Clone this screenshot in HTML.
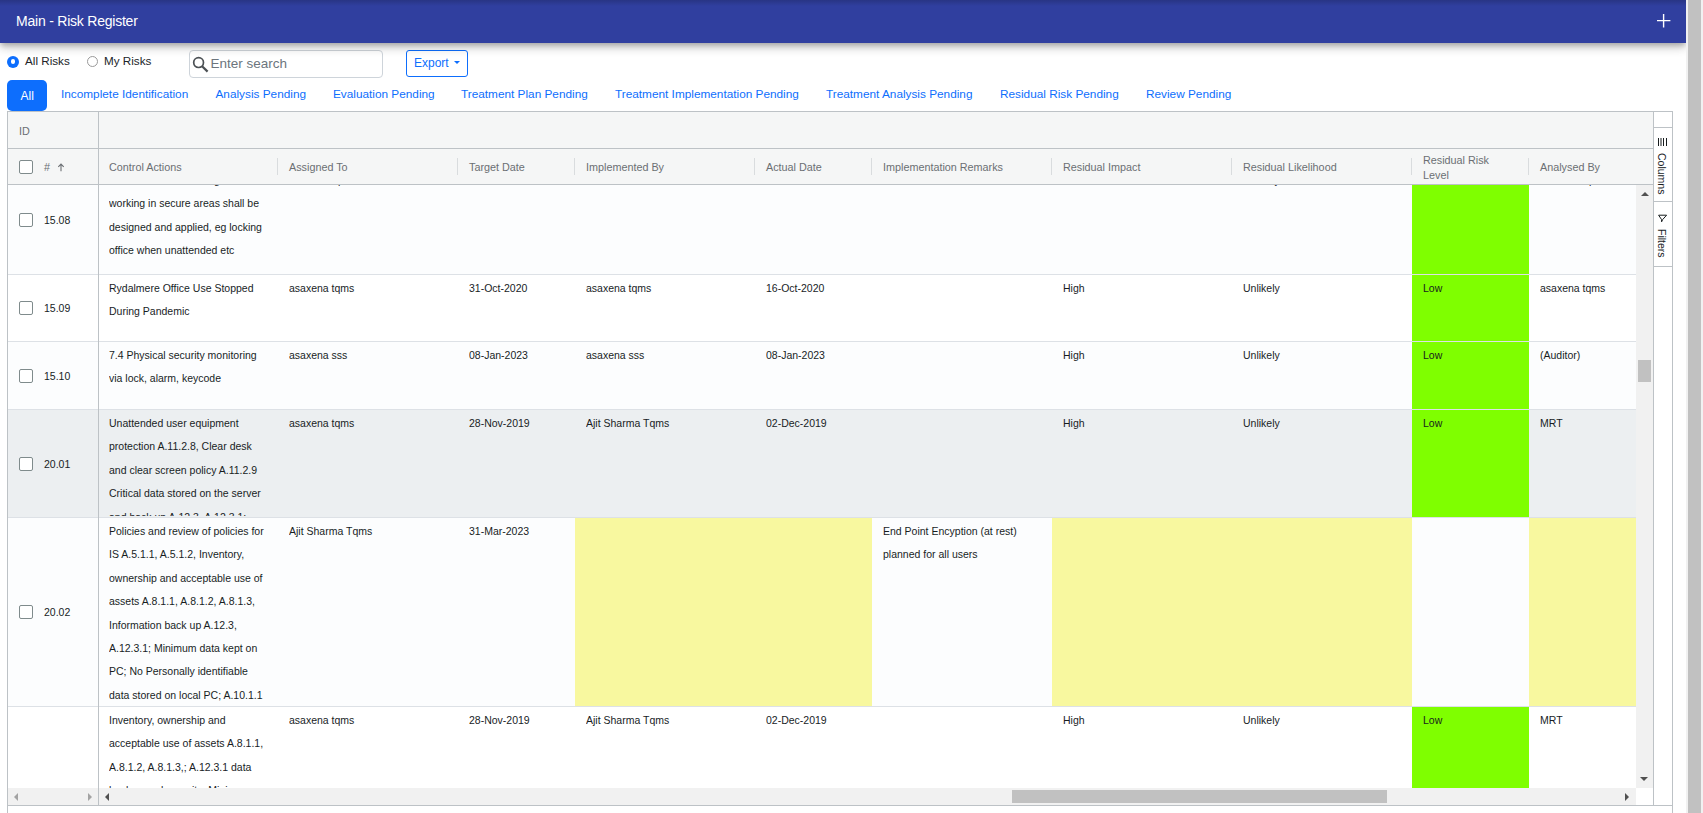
<!DOCTYPE html><html><head><meta charset="utf-8"><style>
*{box-sizing:border-box;margin:0;padding:0}
html,body{width:1703px;height:813px;overflow:hidden;background:#fff;font-family:"Liberation Sans", sans-serif;}
.a{position:absolute}
.t{position:absolute;white-space:pre;}
.cell{position:absolute;font-size:10.5px;line-height:23.4px;color:#181d1f;white-space:pre;}
.cb{position:absolute;width:14px;height:14px;border:1px solid #7f8b8c;border-radius:2px;background:#fff}
.sep{position:absolute;width:1px;height:17px;top:158px;background:#d9dcde}
.hdr{position:absolute;font-size:10.8px;color:#6b6f73;white-space:pre;}
</style></head><body>
<div class="a" style="left:7px;top:55.5px;width:12px;height:12px;border-radius:50%;background:#0d6efd"></div>
<div class="a" style="left:10.7px;top:59.2px;width:4.6px;height:4.6px;border-radius:50%;background:#fff"></div>
<div class="t" style="left:25px;top:54.2px;font-size:11.7px;line-height:14px;color:#212529">All Risks</div>
<div class="a" style="left:87px;top:56px;width:11px;height:11px;border-radius:50%;border:1px solid #9a9a9a;background:#fff"></div>
<div class="t" style="left:104px;top:54.2px;font-size:11.7px;line-height:14px;color:#212529">My Risks</div>
<div class="a" style="left:189px;top:50px;width:194px;height:28px;border:1px solid #ced4da;border-radius:4px;background:#fff"></div>
<svg class="a" style="left:190px;top:55px" width="20" height="20" viewBox="0 0 20 20"><circle cx="8.6" cy="7.6" r="4.9" fill="none" stroke="#4b5054" stroke-width="1.7"/><line x1="12.1" y1="11.2" x2="17.6" y2="16.6" stroke="#4b5054" stroke-width="2.2"/></svg>
<div class="t" style="left:210.5px;top:55.5px;font-size:13.5px;line-height:16px;color:#6c757d">Enter search</div>
<div class="a" style="left:406px;top:50px;width:62px;height:27px;border:1px solid #0d6efd;border-radius:3px;background:#fff"></div>
<div class="t" style="left:414px;top:55.7px;font-size:12px;line-height:14px;color:#0d6efd">Export</div>
<div class="a" style="left:454px;top:61px;width:0;height:0;border-left:3px solid transparent;border-right:3px solid transparent;border-top:3px solid #0d6efd"></div>
<div class="a" style="left:0;top:0;width:1686px;height:43px;background:#303f9f;box-shadow:0 3px 5px -1px rgba(0,0,0,.2), 0 5px 8px 0 rgba(0,0,0,.14), 0 1px 15px 0 rgba(0,0,0,.12);background-image:linear-gradient(rgba(0,0,0,.17),rgba(0,0,0,0) 6px)"></div>
<div class="t" style="left:16px;top:13px;font-size:14px;letter-spacing:-0.22px;line-height:16px;color:#fff">Main - Risk Register</div>
<svg class="a" style="left:1650px;top:7px" width="27" height="27" viewBox="0 0 27 27"><path d="M7 13.6 H20.4 M13.6 7 V20.4" stroke="#fff" stroke-width="1.4"/></svg>
<div class="a" style="left:7px;top:80px;width:40px;height:31px;border-radius:5px;background:#0d6efd"></div>
<div class="t" style="left:20.5px;top:88.5px;font-size:12px;line-height:14px;color:#fff">All</div>
<div class="t" style="left:61px;top:87px;font-size:11.8px;line-height:14px;color:#0d6efd">Incomplete Identification</div>
<div class="t" style="left:215.5px;top:87px;font-size:11.8px;line-height:14px;color:#0d6efd">Analysis Pending</div>
<div class="t" style="left:333px;top:87px;font-size:11.8px;line-height:14px;color:#0d6efd">Evaluation Pending</div>
<div class="t" style="left:461px;top:87px;font-size:11.8px;line-height:14px;color:#0d6efd">Treatment Plan Pending</div>
<div class="t" style="left:615px;top:87px;font-size:11.8px;line-height:14px;color:#0d6efd">Treatment Implementation Pending</div>
<div class="t" style="left:826px;top:87px;font-size:11.8px;line-height:14px;color:#0d6efd">Treatment Analysis Pending</div>
<div class="t" style="left:1000px;top:87px;font-size:11.8px;line-height:14px;color:#0d6efd">Residual Risk Pending</div>
<div class="t" style="left:1146px;top:87px;font-size:11.8px;line-height:14px;color:#0d6efd">Review Pending</div>
<div class="a" style="left:7px;top:111px;width:1666px;height:702px;border:1px solid #bdc2c6;border-bottom:none"></div>
<div class="a" style="left:8px;top:112px;width:1645px;height:72px;background:#f5f6f6"></div>
<div class="a" style="left:8px;top:148px;width:1645px;height:1px;background:#bdc2c6"></div>
<div class="a" style="left:8px;top:184px;width:1645px;height:1px;background:#bdc2c6"></div>
<div class="a" style="left:98px;top:112px;width:1px;height:693px;background:#bdc2c6"></div>
<div class="a" style="left:1653px;top:112px;width:1px;height:693px;background:#bdc2c6"></div>
<div class="a" style="left:8px;top:805px;width:1665px;height:1px;background:#bdc2c6"></div>
<div class="hdr" style="left:19px;top:124px;line-height:14px">ID</div>
<div class="cb" style="left:19px;top:160px"></div>
<div class="hdr" style="left:44px;top:160px;line-height:14px">#</div>
<svg class="a" style="left:56px;top:162px" width="10" height="12" viewBox="0 0 10 12"><path d="M5 2.2 L5 9.2 M2.3 4.8 L5 2.1 L7.7 4.8" fill="none" stroke="#6b6f73" stroke-width="1.1"/></svg>
<div class="hdr" style="left:109px;top:160px;line-height:14px">Control Actions</div>
<div class="hdr" style="left:289px;top:160px;line-height:14px">Assigned To</div>
<div class="sep" style="left:277px"></div>
<div class="hdr" style="left:469px;top:160px;line-height:14px">Target Date</div>
<div class="sep" style="left:457px"></div>
<div class="hdr" style="left:586px;top:160px;line-height:14px">Implemented By</div>
<div class="sep" style="left:574px"></div>
<div class="hdr" style="left:766px;top:160px;line-height:14px">Actual Date</div>
<div class="sep" style="left:754px"></div>
<div class="hdr" style="left:883px;top:160px;line-height:14px">Implementation Remarks</div>
<div class="sep" style="left:871px"></div>
<div class="hdr" style="left:1063px;top:160px;line-height:14px">Residual Impact</div>
<div class="sep" style="left:1051px"></div>
<div class="hdr" style="left:1243px;top:160px;line-height:14px">Residual Likelihood</div>
<div class="sep" style="left:1231px"></div>
<div class="hdr" style="left:1423px;top:152.5px;line-height:15px">Residual Risk
Level</div>
<div class="sep" style="left:1411px"></div>
<div class="hdr" style="left:1540px;top:160px;line-height:14px">Analysed By</div>
<div class="sep" style="left:1528px"></div>
<div class="a" style="left:99px;top:185px;width:1537px;height:603px;overflow:hidden">
<div class="a" style="left:0;top:-19px;width:1600px;height:109px;background:#fcfdfe;border-bottom:1px solid #dde1e6;overflow:hidden">
<div class="cell" style="left:10px;top:2.9px;height:104px;overflow:hidden;width:169px">Controls for the building and
working in secure areas shall be
designed and applied, eg locking
office when unattended etc</div>
<div class="cell" style="left:190px;top:2.9px;height:104px;overflow:hidden;width:169px">asaxena tqms</div>
<div class="cell" style="left:370px;top:2.9px;height:104px;overflow:hidden;width:106px">31-Oct-2020</div>
<div class="cell" style="left:487px;top:2.9px;height:104px;overflow:hidden;width:169px">asaxena sss</div>
<div class="cell" style="left:667px;top:2.9px;height:104px;overflow:hidden;width:106px">16-Oct-2020</div>
<div class="cell" style="left:964px;top:2.9px;height:104px;overflow:hidden;width:169px">Medium</div>
<div class="cell" style="left:1144px;top:2.9px;height:104px;overflow:hidden;width:169px">Unlikely</div>
<div class="a" style="left:1313px;top:0;width:117px;height:108px;background:#7fff00"></div>
<div class="cell" style="left:1324px;top:2.9px;height:104px;overflow:hidden;width:106px">Low</div>
<div class="cell" style="left:1441px;top:2.9px;height:104px;overflow:hidden;width:169px">asaxena tqms</div>
</div>
<div class="a" style="left:0;top:90px;width:1600px;height:67px;background:#ffffff;border-bottom:1px solid #dde1e6;overflow:hidden">
<div class="cell" style="left:10px;top:1.9px;height:63px;overflow:hidden;width:169px">Rydalmere Office Use Stopped
During Pandemic</div>
<div class="cell" style="left:190px;top:1.9px;height:63px;overflow:hidden;width:169px">asaxena tqms</div>
<div class="cell" style="left:370px;top:1.9px;height:63px;overflow:hidden;width:106px">31-Oct-2020</div>
<div class="cell" style="left:487px;top:1.9px;height:63px;overflow:hidden;width:169px">asaxena tqms</div>
<div class="cell" style="left:667px;top:1.9px;height:63px;overflow:hidden;width:106px">16-Oct-2020</div>
<div class="cell" style="left:964px;top:1.9px;height:63px;overflow:hidden;width:169px">High</div>
<div class="cell" style="left:1144px;top:1.9px;height:63px;overflow:hidden;width:169px">Unlikely</div>
<div class="a" style="left:1313px;top:0;width:117px;height:66px;background:#7fff00"></div>
<div class="cell" style="left:1324px;top:1.9px;height:63px;overflow:hidden;width:106px">Low</div>
<div class="cell" style="left:1441px;top:1.9px;height:63px;overflow:hidden;width:169px">asaxena tqms</div>
</div>
<div class="a" style="left:0;top:157px;width:1600px;height:68px;background:#fcfdfe;border-bottom:1px solid #dde1e6;overflow:hidden">
<div class="cell" style="left:10px;top:1.9px;height:64px;overflow:hidden;width:169px">7.4 Physical security monitoring
via lock, alarm, keycode</div>
<div class="cell" style="left:190px;top:1.9px;height:64px;overflow:hidden;width:169px">asaxena sss</div>
<div class="cell" style="left:370px;top:1.9px;height:64px;overflow:hidden;width:106px">08-Jan-2023</div>
<div class="cell" style="left:487px;top:1.9px;height:64px;overflow:hidden;width:169px">asaxena sss</div>
<div class="cell" style="left:667px;top:1.9px;height:64px;overflow:hidden;width:106px">08-Jan-2023</div>
<div class="cell" style="left:964px;top:1.9px;height:64px;overflow:hidden;width:169px">High</div>
<div class="cell" style="left:1144px;top:1.9px;height:64px;overflow:hidden;width:169px">Unlikely</div>
<div class="a" style="left:1313px;top:0;width:117px;height:67px;background:#7fff00"></div>
<div class="cell" style="left:1324px;top:1.9px;height:64px;overflow:hidden;width:106px">Low</div>
<div class="cell" style="left:1441px;top:1.9px;height:64px;overflow:hidden;width:169px">(Auditor)</div>
</div>
<div class="a" style="left:0;top:225px;width:1600px;height:108px;background:#eceff1;border-bottom:1px solid #dde1e6;overflow:hidden">
<div class="cell" style="left:10px;top:1.9px;height:104px;overflow:hidden;width:169px">Unattended user equipment
protection A.11.2.8, Clear desk
and clear screen policy A.11.2.9
Critical data stored on the server
and back up A.12.3, A.12.3.1;</div>
<div class="cell" style="left:190px;top:1.9px;height:104px;overflow:hidden;width:169px">asaxena tqms</div>
<div class="cell" style="left:370px;top:1.9px;height:104px;overflow:hidden;width:106px">28-Nov-2019</div>
<div class="cell" style="left:487px;top:1.9px;height:104px;overflow:hidden;width:169px">Ajit Sharma Tqms</div>
<div class="cell" style="left:667px;top:1.9px;height:104px;overflow:hidden;width:106px">02-Dec-2019</div>
<div class="cell" style="left:964px;top:1.9px;height:104px;overflow:hidden;width:169px">High</div>
<div class="cell" style="left:1144px;top:1.9px;height:104px;overflow:hidden;width:169px">Unlikely</div>
<div class="a" style="left:1313px;top:0;width:117px;height:107px;background:#7fff00"></div>
<div class="cell" style="left:1324px;top:1.9px;height:104px;overflow:hidden;width:106px">Low</div>
<div class="cell" style="left:1441px;top:1.9px;height:104px;overflow:hidden;width:169px">MRT</div>
</div>
<div class="a" style="left:0;top:333px;width:1600px;height:189px;background:#fcfdfe;border-bottom:1px solid #dde1e6;overflow:hidden">
<div class="cell" style="left:10px;top:1.9px;height:185px;overflow:hidden;width:169px">Policies and review of policies for
IS A.5.1.1, A.5.1.2, Inventory,
ownership and acceptable use of
assets A.8.1.1, A.8.1.2, A.8.1.3,
Information back up A.12.3,
A.12.3.1; Minimum data kept on
PC; No Personally identifiable
data stored on local PC; A.10.1.1</div>
<div class="cell" style="left:190px;top:1.9px;height:185px;overflow:hidden;width:169px">Ajit Sharma Tqms</div>
<div class="cell" style="left:370px;top:1.9px;height:185px;overflow:hidden;width:106px">31-Mar-2023</div>
<div class="a" style="left:476px;top:0;width:180px;height:188px;background:#f8f89f"></div>
<div class="a" style="left:656px;top:0;width:117px;height:188px;background:#f8f89f"></div>
<div class="cell" style="left:784px;top:1.9px;height:185px;overflow:hidden;width:169px">End Point Encyption (at rest)
planned for all users</div>
<div class="a" style="left:953px;top:0;width:180px;height:188px;background:#f8f89f"></div>
<div class="a" style="left:1133px;top:0;width:180px;height:188px;background:#f8f89f"></div>
<div class="a" style="left:1430px;top:0;width:180px;height:188px;background:#f8f89f"></div>
</div>
<div class="a" style="left:0;top:522px;width:1600px;height:189px;background:#ffffff;border-bottom:1px solid #dde1e6;overflow:hidden">
<div class="cell" style="left:10px;top:1.9px;height:185px;overflow:hidden;width:169px">Inventory, ownership and
acceptable use of assets A.8.1.1,
A.8.1.2, A.8.1.3,; A.12.3.1 data
backup and security; Minimum
data kept on PC</div>
<div class="cell" style="left:190px;top:1.9px;height:185px;overflow:hidden;width:169px">asaxena tqms</div>
<div class="cell" style="left:370px;top:1.9px;height:185px;overflow:hidden;width:106px">28-Nov-2019</div>
<div class="cell" style="left:487px;top:1.9px;height:185px;overflow:hidden;width:169px">Ajit Sharma Tqms</div>
<div class="cell" style="left:667px;top:1.9px;height:185px;overflow:hidden;width:106px">02-Dec-2019</div>
<div class="cell" style="left:964px;top:1.9px;height:185px;overflow:hidden;width:169px">High</div>
<div class="cell" style="left:1144px;top:1.9px;height:185px;overflow:hidden;width:169px">Unlikely</div>
<div class="a" style="left:1313px;top:0;width:117px;height:188px;background:#7fff00"></div>
<div class="cell" style="left:1324px;top:1.9px;height:185px;overflow:hidden;width:106px">Low</div>
<div class="cell" style="left:1441px;top:1.9px;height:185px;overflow:hidden;width:169px">MRT</div>
</div>
</div>
<div class="a" style="left:8px;top:185px;width:90px;height:603px;overflow:hidden">
<div class="a" style="left:0;top:-19px;width:90px;height:109px;background:#fcfdfe;border-bottom:1px solid #dde1e6">
<div class="cb" style="left:11px;top:47.0px"></div>
<div class="cell" style="left:36px;top:43.3px">15.08</div>
</div>
<div class="a" style="left:0;top:90px;width:90px;height:67px;background:#ffffff;border-bottom:1px solid #dde1e6">
<div class="cb" style="left:11px;top:26.0px"></div>
<div class="cell" style="left:36px;top:22.3px">15.09</div>
</div>
<div class="a" style="left:0;top:157px;width:90px;height:68px;background:#fcfdfe;border-bottom:1px solid #dde1e6">
<div class="cb" style="left:11px;top:26.5px"></div>
<div class="cell" style="left:36px;top:22.8px">15.10</div>
</div>
<div class="a" style="left:0;top:225px;width:90px;height:108px;background:#eceff1;border-bottom:1px solid #dde1e6">
<div class="cb" style="left:11px;top:46.5px"></div>
<div class="cell" style="left:36px;top:42.8px">20.01</div>
</div>
<div class="a" style="left:0;top:333px;width:90px;height:189px;background:#fcfdfe;border-bottom:1px solid #dde1e6">
<div class="cb" style="left:11px;top:87.0px"></div>
<div class="cell" style="left:36px;top:83.3px">20.02</div>
</div>
<div class="a" style="left:0;top:522px;width:90px;height:189px;background:#ffffff;border-bottom:1px solid #dde1e6">
<div class="cb" style="left:11px;top:87.0px"></div>
<div class="cell" style="left:36px;top:83.3px">20.03</div>
</div>
</div>
<div class="a" style="left:1636px;top:185px;width:17px;height:603px;background:#f1f1f1"></div>
<div class="a" style="left:1638px;top:360px;width:13px;height:22px;background:#c1c1c1"></div>
<div class="a" style="left:1640.5px;top:192px;width:0;height:0;border-left:4px solid transparent;border-right:4px solid transparent;border-bottom:4px solid #505050"></div>
<div class="a" style="left:1640px;top:777px;width:0;height:0;border-left:4px solid transparent;border-right:4px solid transparent;border-top:4px solid #505050"></div>
<div class="a" style="left:8px;top:788px;width:90px;height:17px;background:#f1f1f1"></div>
<div class="a" style="left:99px;top:788px;width:1537px;height:17px;background:#f1f1f1"></div>
<div class="a" style="left:1012px;top:790px;width:375px;height:13px;background:#c1c1c1"></div>
<div class="a" style="left:14px;top:793px;width:0;height:0;border-top:4px solid transparent;border-bottom:4px solid transparent;border-right:4px solid #a3a3a3"></div>
<div class="a" style="left:88px;top:793px;width:0;height:0;border-top:4px solid transparent;border-bottom:4px solid transparent;border-left:4px solid #a3a3a3"></div>
<div class="a" style="left:105px;top:793px;width:0;height:0;border-top:4px solid transparent;border-bottom:4px solid transparent;border-right:4px solid #505050"></div>
<div class="a" style="left:1625px;top:793px;width:0;height:0;border-top:4px solid transparent;border-bottom:4px solid transparent;border-left:4px solid #505050"></div>
<div class="a" style="left:1654px;top:112px;width:18px;height:693px;background:#fff"></div>
<div class="a" style="left:1654px;top:127px;width:18px;height:1px;background:#bdc2c6"></div>
<div class="a" style="left:1654px;top:201px;width:18px;height:1px;background:#bdc2c6"></div>
<div class="a" style="left:1654px;top:266px;width:18px;height:1px;background:#bdc2c6"></div>
<div class="t" style="left:1656px;top:152.5px;font-size:10.5px;line-height:12px;color:#181d1f;transform-origin:0 0;transform:translate(11.5px,0) rotate(90deg)">Columns</div>
<div class="t" style="left:1656px;top:229px;font-size:10.5px;line-height:12px;color:#181d1f;transform-origin:0 0;transform:translate(11.5px,0) rotate(90deg)">Filters</div>
<svg class="a" style="left:1652px;top:132px" width="20" height="20" viewBox="0 0 20 20"><path d="M6.5 6 V14 M9 6 V14 M11.5 6 V14 M14.5 6 V14" stroke="#181d1f" stroke-width="1"/></svg>
<svg class="a" style="left:1652px;top:208px" width="20" height="20" viewBox="0 0 20 20"><path d="M6.6 7.2 H14.6 L10.6 11.6 L9.6 13.8 L9.6 11.6 Z" fill="none" stroke="#181d1f" stroke-width="1" stroke-linejoin="round"/></svg>
<div class="a" style="left:1686px;top:0;width:17px;height:813px;background:#f1f1f1"></div>
<div class="a" style="left:1688px;top:0;width:13px;height:813px;background:#c1c1c1"></div>
</body></html>
